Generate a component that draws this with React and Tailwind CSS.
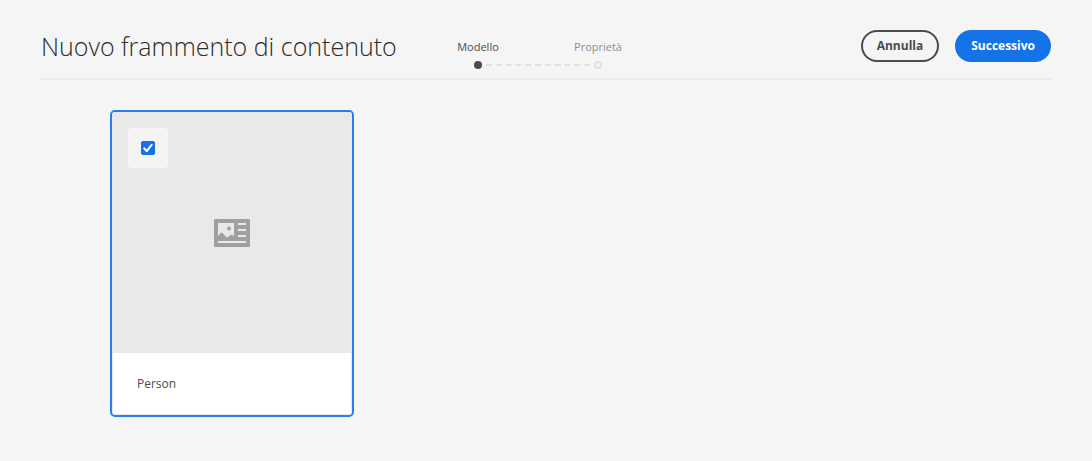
const steps = [
  { label: 'Modello', current: true },
  { label: 'Proprietà', current: false },
];

function StepList() {
  return (
    <ol className="flex shrink-0 text-[11px] leading-4">
      {steps.map((step, index) => (
        <li
          key={step.label}
          aria-current={step.current ? 'step' : undefined}
          className="relative flex w-[120px] flex-col items-center gap-1.5"
        >
          <span className={step.current ? 'text-[#4b4b4b]' : 'text-[#8e8e8e]'}>{step.label}</span>
          <span
            className={
              step.current
                ? 'size-2 rounded-full bg-[#4b4b4b]'
                : 'size-2 rounded-full border-2 border-[#e1e1e1]'
            }
          />
          {index < steps.length - 1 && (
            <svg
              className="absolute bottom-[3px] left-[68px]"
              width="104"
              height="2"
              viewBox="0 0 104 2"
              aria-hidden="true"
            >
              <line x1="0" y1="1" x2="104" y2="1" stroke="#e1e1e1" strokeWidth="2" strokeDasharray="6 3.8" />
            </svg>
          )}
        </li>
      ))}
    </ol>
  );
}

function FragmentIcon() {
  return (
    <svg width="36" height="28" viewBox="0 0 36 28" aria-hidden="true">
      <rect width="36" height="28" rx="1" fill="#a0a0a0" />
      <path
        fill="#e9e9e9"
        d="M4 4h16v13.5L18.6 16 17 15.6 15 17.4 12.4 18.2 8.6 14 7.6 13.6 6.6 14 4 17.2zM24 4h8v2h-8zM24 10h8v2h-8zM24 16h8v2h-8zM4 22h28v2H4z"
      />
      <circle cx="15" cy="9.5" r="2" fill="#a0a0a0" />
    </svg>
  );
}

function ModelCard({ title }) {
  return (
    <label className="block w-[244px] cursor-pointer overflow-hidden rounded-[5px] border-2 border-[#2680eb] bg-[#e9e9e9]">
      <span className="relative flex h-[241px] items-center justify-center bg-[#e9e9e9]">
        <span className="absolute top-4 left-4 flex size-10 items-center justify-center rounded bg-[#f4f4f4]">
          <input
            type="checkbox"
            defaultChecked
            className="peer size-3.5 appearance-none rounded-xs border-2 border-[#6e6e6e] bg-white checked:border-[#1473e6] checked:bg-[#1473e6]"
          />
          <svg
            className="pointer-events-none absolute hidden peer-checked:block"
            width="10"
            height="10"
            viewBox="0 0 10 10"
            aria-hidden="true"
          >
            <path d="M1.2 5.4 3.8 8.2 8.6 1.8" fill="none" stroke="#fff" strokeWidth="2" strokeLinecap="round" strokeLinejoin="round" />
          </svg>
        </span>
        <FragmentIcon />
      </span>
      <span className="mx-px mb-px block bg-white px-6 py-5 text-xs leading-[21px] text-[#4b4b4b]">{title}</span>
    </label>
  );
}

export default function App() {
  return (
    <div className="min-h-screen bg-[#f5f5f5] px-[41px] font-['Open_Sans','Noto_Sans',sans-serif] text-[#2c2c2c]">
      <header className="flex items-start border-b-2 border-[#eaeaea] pt-[30px] pb-[9px]">
        <h1 className="w-[377px] shrink-0 text-[25px] leading-8 font-light whitespace-nowrap">
          Nuovo frammento di contenuto
        </h1>
        <div className="pt-[9px]">
          <StepList />
        </div>
        <div className="ml-auto flex gap-4 text-xs leading-4 font-bold">
          <button type="button" className="h-8 rounded-full border-2 border-[#4b4b4b] px-3.5 text-[#4b4b4b]">
            Annulla
          </button>
          <button type="button" className="h-8 rounded-full border-2 border-[#1473e6] bg-[#1473e6] px-3.5 text-white">
            Successivo
          </button>
        </div>
      </header>
      <main className="px-[69px] pt-[30px]">
        <ModelCard title="Person" />
      </main>
    </div>
  );
}
